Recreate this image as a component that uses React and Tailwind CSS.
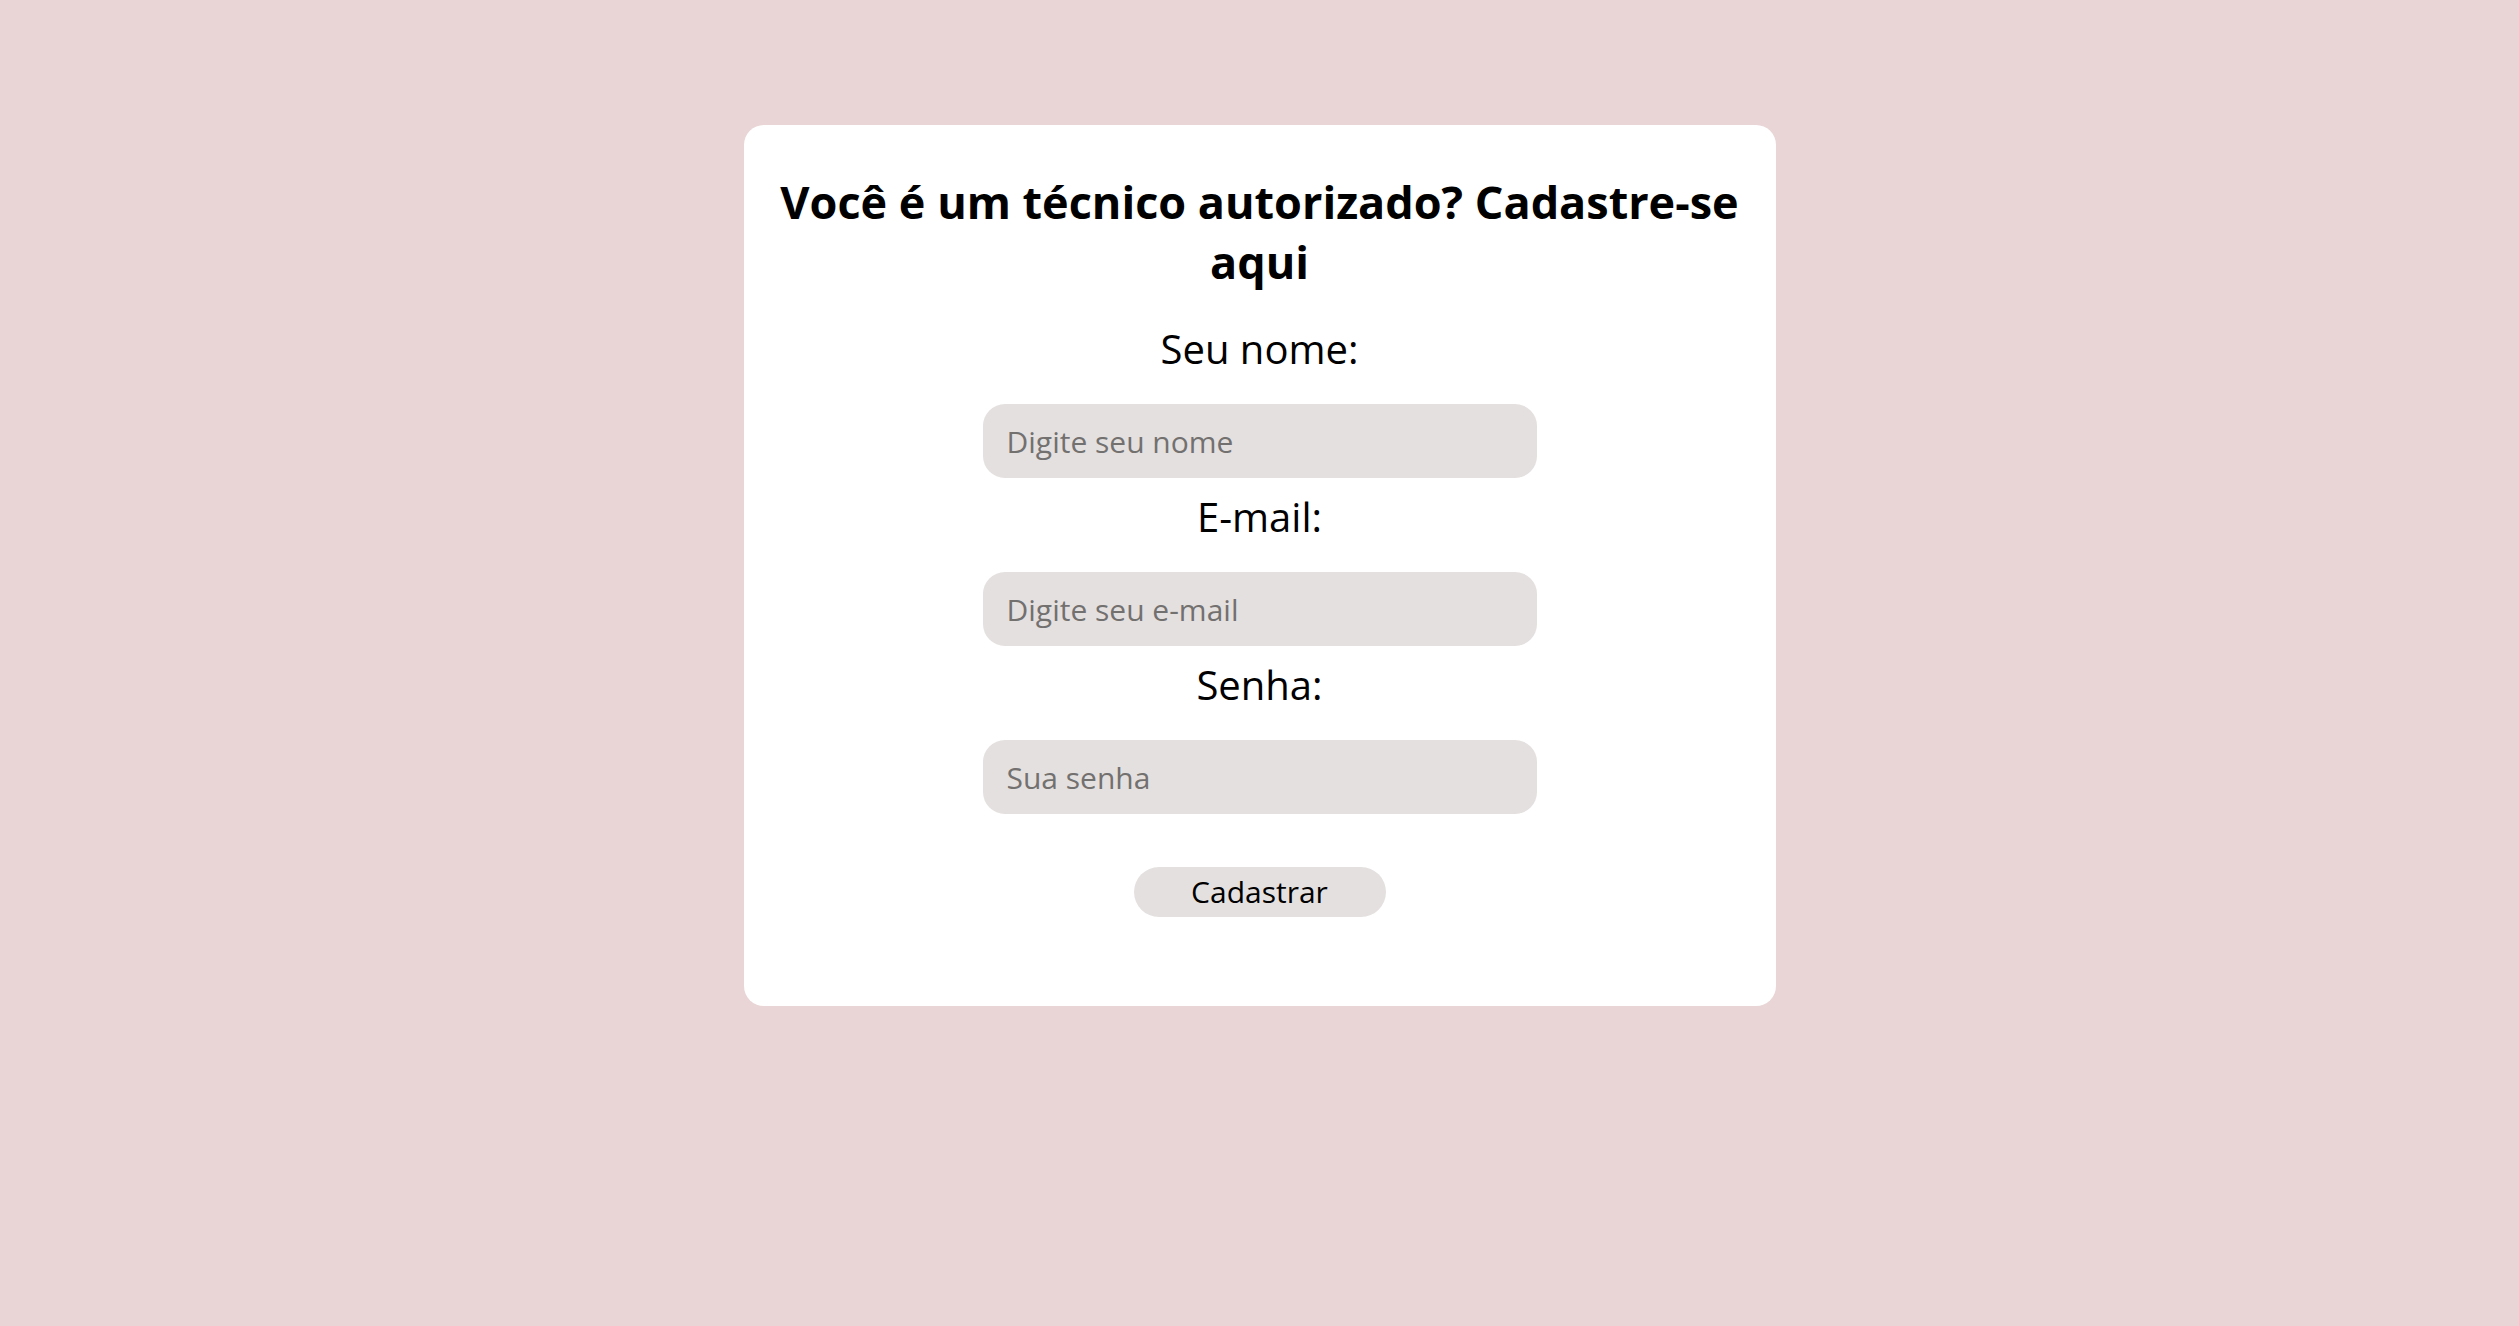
import React from "react";

export default function App() {
  const font = { fontFamily: "'Open Sans', Lato, sans-serif" };
  const inputCls =
    "mt-[29px] w-[554px] h-[74px] rounded-[22px] bg-[#e4e0df] pl-[24px] pr-[26px] text-[30px] text-black placeholder:text-[#737070] outline-none";
  return (
    <div
      className="min-h-screen w-full bg-[#e9d5d5] flex justify-center items-start pt-[125px]"
      style={font}
    >
      <div className="w-[1032px] bg-white rounded-[20px] flex flex-col items-center pt-[47px] pb-[89px]">
        <h2 className="text-[45px] leading-[60px] font-bold text-black text-center px-[30px]">
          Você é um técnico autorizado? Cadastre-se aqui
        </h2>
        <form className="flex flex-col items-center mt-[31px]" onSubmit={(e) => e.preventDefault()}>
          <label className="text-[40px] leading-[52px] text-black">Seu nome:</label>
          <input type="text" placeholder="Digite seu nome" className={inputCls} />
          <label className="mt-[13px] text-[40px] leading-[52px] text-black">E-mail:</label>
          <input type="email" placeholder="Digite seu e-mail" className={inputCls} />
          <label className="mt-[13px] text-[40px] leading-[52px] text-black">Senha:</label>
          <input type="password" placeholder="Sua senha" className={inputCls} />
          <button
            type="submit"
            className="mt-[53px] w-[252px] h-[50px] rounded-full bg-[#e4e0df] text-[30px] leading-[50px] text-black"
          >
            Cadastrar
          </button>
        </form>
      </div>
    </div>
  );
}
